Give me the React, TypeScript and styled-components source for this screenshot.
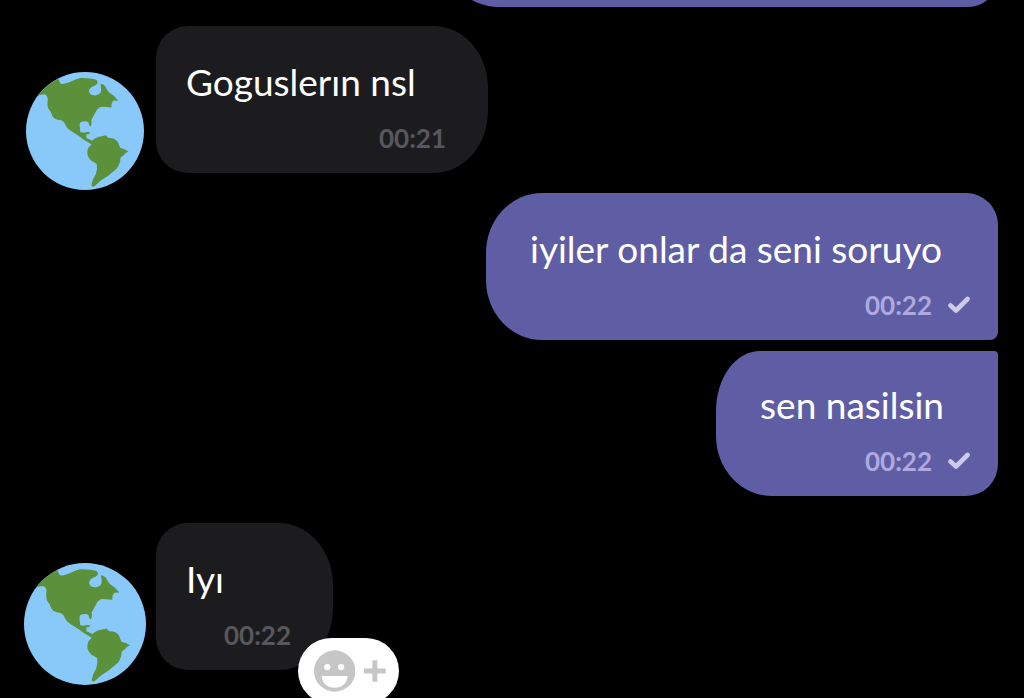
import React from "react";
import styled, { createGlobalStyle } from "styled-components";

const GlobalStyle = createGlobalStyle`
  *, *::before, *::after { box-sizing: border-box; }
  body {
    margin: 0;
    background: #000;
    font-family: Lato, "Liberation Sans", sans-serif;
  }
`;

const Chat = styled.main`
  display: flex;
  flex-direction: column;
  height: 100vh;
  overflow: hidden;
  padding: 0 26px 0 24px;
  background: #000;
`;

/* Tail of the message that is scrolled past the top edge. */
const ScrolledBubble = styled.div`
  flex: none;
  align-self: flex-end;
  width: 57%;
  height: 147px;
  margin-top: -140px;
  border-radius: 30px 30px 30px 56px;
  background: #5f5da4;
`;

const Row = styled.article<{ $own?: boolean; $gap: number }>`
  display: flex;
  flex: none;
  align-items: flex-start;
  justify-content: ${(p) => (p.$own ? "flex-end" : "flex-start")};
  gap: 10px;
  margin-top: ${(p) => p.$gap}px;
`;

const AvatarSlot = styled.div`
  display: flex;
  align-self: flex-end;
  justify-content: center;
  width: 122px;
`;

const Globe = styled.svg<{ $size: number }>`
  display: block;
  width: ${(p) => p.$size}px;
  height: ${(p) => p.$size}px;
`;

const Bubble = styled.div<{
  $own?: boolean;
  $grouped?: boolean;
  $corners: string;
  $minWidth: number;
  $drop: number;
}>`
  position: relative;
  display: flex;
  flex-direction: column;
  min-width: ${(p) => p.$minWidth}px;
  margin-bottom: ${(p) => p.$drop}px;
  padding: ${(p) => (p.$own ? "32px 28px 19px 44px" : "32px 42px 19px 30px")};
  padding-top: ${(p) => (p.$grouped ? 30 : 32)}px;
  border-radius: ${(p) => p.$corners};
  background: ${(p) => (p.$own ? "#5f5da4" : "#1c1c1e")};
`;

const Text = styled.p<{ $own?: boolean }>`
  margin: 0;
  padding-right: ${(p) => (p.$own ? 26 : 0)}px;
  color: #fff;
  font-size: 37px;
  line-height: 48px;
  white-space: nowrap;
`;

const Meta = styled.div<{ $own?: boolean }>`
  display: flex;
  align-items: center;
  justify-content: flex-end;
  gap: 16px;
  margin-top: 16px;
  color: ${(p) => (p.$own ? "#aeaae0" : "#58575c")};
  font-size: 26px;
  font-weight: 700;
  line-height: 32px;
`;

const Tick = styled.svg`
  display: block;
  width: 22px;
  height: 18px;
`;

const ReactButton = styled.button`
  position: absolute;
  top: 115px;
  right: -66px;
  display: flex;
  align-items: center;
  gap: 8px;
  width: 101px;
  height: 66px;
  padding: 0 12px 0 16px;
  border: 0;
  border-radius: 33px;
  background: #fff;
  cursor: pointer;
`;

const Smile = styled.svg`
  display: block;
  width: 42px;
  height: 42px;
`;

const Plus = styled.svg`
  display: block;
  width: 24px;
  height: 24px;
`;

function Avatar({ size }: { size: number }) {
  return (
    <AvatarSlot>
      <Globe $size={size} viewBox="34 33 352 352" role="img" aria-label="Contact">
        <circle cx="210" cy="209" r="176" fill="#88c9f9" />
        <path
          fill="#5c913b"
          d="M69 104Q94 71 130 53L136 66Q138 71 148 68C166 65 178 55 196 51Q226 50 243 56Q254 64 240 73Q222 79 222 90Q223 103 240 103Q256 101 258 90Q259 80 256 68Q269 70 273 80Q276 92 296 104L309 118L294 119Q288 126 289 139L262 137Q249 137 241 154L229 176Q231 190 227 196Q221 192 220 183Q212 178 205 181Q194 180 194 192L196 212Q207 216 214 212L226 213L222 218L214 219L214 230L232 238Q242 227 260 225L272 222L280 230Q299 229 308 242L315 260L326 263L340 270Q327 276 326 281L316 288Q316 305 305 321L280 342L258 356L240 372Q234 377 229 372Q231 354 242 338Q248 321 245 307L228 297Q215 284 217 270Q218 257 230 249L203 233Q194 225 184 219Q168 210 157 200Q151 191 148 184Q140 174 130 176L118 171Q112 166 108 152L100 141Q96 126 99 114Q98 102 89 99Q78 99 69 104Z"
        />
      </Globe>
    </AvatarSlot>
  );
}

interface MessageProps {
  text: string;
  time: string;
  gap: number;
  corners: string;
  minWidth: number;
  own?: boolean;
  grouped?: boolean;
  avatarSize?: number;
  avatarDrop?: number;
  children?: React.ReactNode;
}

function Message({
  text,
  time,
  gap,
  corners,
  minWidth,
  own,
  grouped,
  avatarSize,
  avatarDrop = 0,
  children,
}: MessageProps) {
  return (
    <Row $own={own} $gap={gap}>
      {avatarSize && <Avatar size={avatarSize} />}
      <Bubble $own={own} $grouped={grouped} $corners={corners} $minWidth={minWidth} $drop={avatarDrop}>
        <Text $own={own}>{text}</Text>
        <Meta $own={own}>
          <time>{time}</time>
          {own && (
            <Tick viewBox="0 0 22 18" role="img" aria-label="Sent">
              <path
                d="M2.5 9.5L8 14.5L19.5 3"
                fill="none"
                stroke="#cccbec"
                strokeWidth="4.6"
                strokeLinecap="round"
                strokeLinejoin="round"
              />
            </Tick>
          )}
        </Meta>
        {children}
      </Bubble>
    </Row>
  );
}

export default function App() {
  return (
    <>
      <GlobalStyle />
      <Chat>
        <ScrolledBubble />
        <Message
          text="Goguslerın nsl"
          time="00:21"
          gap={19}
          avatarSize={118}
          avatarDrop={17}
          minWidth={332}
          corners="32px 54px 54px 32px / 32px 62px 62px 32px"
        />
        <Message
          own
          text="iyiler onlar da seni soruyo"
          time="00:22"
          gap={3}
          minWidth={512}
          corners="56px 32px 8px 56px / 60px 32px 8px 60px"
        />
        <Message
          own
          grouped
          text="sen nasilsin"
          time="00:22"
          gap={11}
          minWidth={281}
          corners="44px 4px 32px 56px / 60px 4px 32px 60px"
        />
        <Message
          text="Iyı"
          time="00:22"
          gap={27}
          avatarSize={122}
          avatarDrop={15}
          minWidth={177}
          corners="32px 54px 54px 32px / 32px 62px 62px 32px"
        >
          <ReactButton type="button" aria-label="Add reaction">
            <Smile viewBox="0 0 42 42" aria-hidden="true">
              <circle cx="21" cy="21" r="21" fill="#c6c6c6" />
              <circle cx="13.5" cy="17" r="3.2" fill="#fff" />
              <circle cx="27.5" cy="17" r="3.2" fill="#fff" />
              <path d="M8 26H34C34 33 28.5 38 21 38S8 33 8 26Z" fill="#fff" />
            </Smile>
            <Plus viewBox="0 0 24 24" aria-hidden="true">
              <path d="M9.5 1H14.5V9.5H23V14.5H14.5V23H9.5V14.5H1V9.5H9.5Z" fill="#c6c6c6" />
            </Plus>
          </ReactButton>
        </Message>
      </Chat>
    </>
  );
}
